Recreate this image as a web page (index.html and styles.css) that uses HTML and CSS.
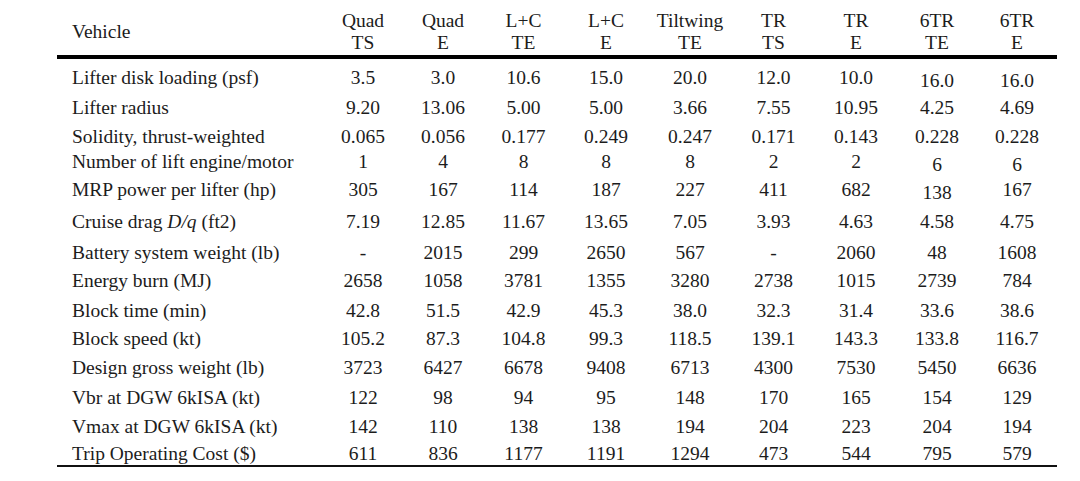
FILE: index.html
```html
<!DOCTYPE html>
<html>
<head>
<meta charset="utf-8">
<link rel="stylesheet" href="styles.css">
</head>
<body>
<table class="data">
  <colgroup>
    <col class="c-label"><col class="c80"><col class="c80"><col class="c81"><col class="c84"><col class="c84"><col class="c83"><col class="c82"><col class="c80"><col class="c80">
  </colgroup>
  <thead>
    <tr>
      <th class="lab">Vehicle</th>
      <th>Quad<br>TS</th>
      <th>Quad<br>E</th>
      <th>L+C<br>TE</th>
      <th>L+C<br>E</th>
      <th>Tiltwing<br>TE</th>
      <th>TR<br>TS</th>
      <th>TR<br>E</th>
      <th>6TR<br>TE</th>
      <th>6TR<br>E</th>
    </tr>
  </thead>
  <tbody>
    <tr class="pt8"><td class="lab">Lifter disk loading (psf)</td><td>3.5</td><td>3.0</td><td>10.6</td><td>15.0</td><td>20.0</td><td>12.0</td><td>10.0</td><td><span class="dn">16.0</span></td><td><span class="dn">16.0</span></td></tr>
    <tr class="pt8"><td class="lab">Lifter radius</td><td>9.20</td><td>13.06</td><td>5.00</td><td>5.00</td><td>3.66</td><td>7.55</td><td>10.95</td><td>4.25</td><td>4.69</td></tr>
    <tr class="pt7"><td class="lab">Solidity, thrust-weighted</td><td>0.065</td><td>0.056</td><td>0.177</td><td>0.249</td><td>0.247</td><td>0.171</td><td>0.143</td><td>0.228</td><td>0.228</td></tr>
    <tr class="pt3"><td class="lab">Number of lift engine/motor</td><td>1</td><td>4</td><td>8</td><td>8</td><td>8</td><td>2</td><td>2</td><td><span class="dn">6</span></td><td><span class="dn">6</span></td></tr>
    <tr class="pt6"><td class="lab">MRP power per lifter (hp)</td><td>305</td><td>167</td><td>114</td><td>187</td><td>227</td><td>411</td><td>682</td><td><span class="dn">138</span></td><td>167</td></tr>
    <tr class="pt10"><td class="lab">Cruise drag <i>D/q</i> (ft2)</td><td>7.19</td><td>12.85</td><td>11.67</td><td>13.65</td><td>7.05</td><td>3.93</td><td>4.63</td><td>4.58</td><td>4.75</td></tr>
    <tr class="pt9"><td class="lab">Battery system weight (lb)</td><td>-</td><td>2015</td><td>299</td><td>2650</td><td>567</td><td>-</td><td>2060</td><td>48</td><td>1608</td></tr>
    <tr class="pt6"><td class="lab">Energy burn (MJ)</td><td>2658</td><td>1058</td><td>3781</td><td>1355</td><td>3280</td><td>2738</td><td>1015</td><td>2739</td><td>784</td></tr>
    <tr class="pt8"><td class="lab">Block time (min)</td><td>42.8</td><td>51.5</td><td>42.9</td><td>45.3</td><td>38.0</td><td>32.3</td><td>31.4</td><td>33.6</td><td>38.6</td></tr>
    <tr class="pt6"><td class="lab">Block speed (kt)</td><td>105.2</td><td>87.3</td><td>104.8</td><td>99.3</td><td>118.5</td><td>139.1</td><td>143.3</td><td>133.8</td><td>116.7</td></tr>
    <tr class="pt7"><td class="lab">Design gross weight (lb)</td><td>3723</td><td>6427</td><td>6678</td><td>9408</td><td>6713</td><td>4300</td><td>7530</td><td>5450</td><td>6636</td></tr>
    <tr class="pt8"><td class="lab">Vbr at DGW 6kISA (kt)</td><td>122</td><td>98</td><td>94</td><td>95</td><td>148</td><td>170</td><td>165</td><td>154</td><td>129</td></tr>
    <tr class="pt7"><td class="lab">Vmax at DGW 6kISA (kt)</td><td>142</td><td>110</td><td>138</td><td>138</td><td>194</td><td>204</td><td>223</td><td>204</td><td>194</td></tr>
    <tr class="pt5 last"><td class="lab">Trip Operating Cost ($)</td><td>611</td><td>836</td><td>1177</td><td>1191</td><td>1294</td><td>473</td><td>544</td><td>795</td><td>579</td></tr>
  </tbody>
</table>
</body>
</html>
```

FILE: styles.css
```css
html, body {
  margin: 0;
  padding: 0;
  background: #ffffff;
}

body {
  font-family: "Liberation Serif", "Times New Roman", serif;
  font-size: 19.5px;
  color: #1c1c1c;
}

.data {
  margin: 10px 0 0 57px;
  width: 1000px;
  table-layout: fixed;
  border-collapse: separate;
  border-spacing: 0;
}

.c-label { width: 266px; }
.c80 { width: 80px; }
.c81 { width: 81px; }
.c82 { width: 82px; }
.c83 { width: 83px; }
.c84 { width: 84px; }

.data th {
  font-weight: normal;
  line-height: 22px;
  padding: 0 0 1px 0;
  text-align: center;
  vertical-align: middle;
  border-bottom: 4px solid #000;
  white-space: nowrap;
}

.data td {
  line-height: 22px;
  padding: 0;
  text-align: center;
  vertical-align: top;
  white-space: nowrap;
}

.data .lab {
  text-align: left;
  padding-left: 15px;
}

.data .last td {
  border-bottom: 2px solid #111;
}

.pt3 td { padding-top: 3px; }
.pt5 td { padding-top: 5px; }
.pt6 td { padding-top: 6px; }
.pt7 td { padding-top: 7px; }
.pt8 td { padding-top: 8px; }
.pt9 td { padding-top: 9px; }
.pt10 td { padding-top: 10px; }

.dn {
  display: inline-block;
  transform: translateY(3px);
}
```
